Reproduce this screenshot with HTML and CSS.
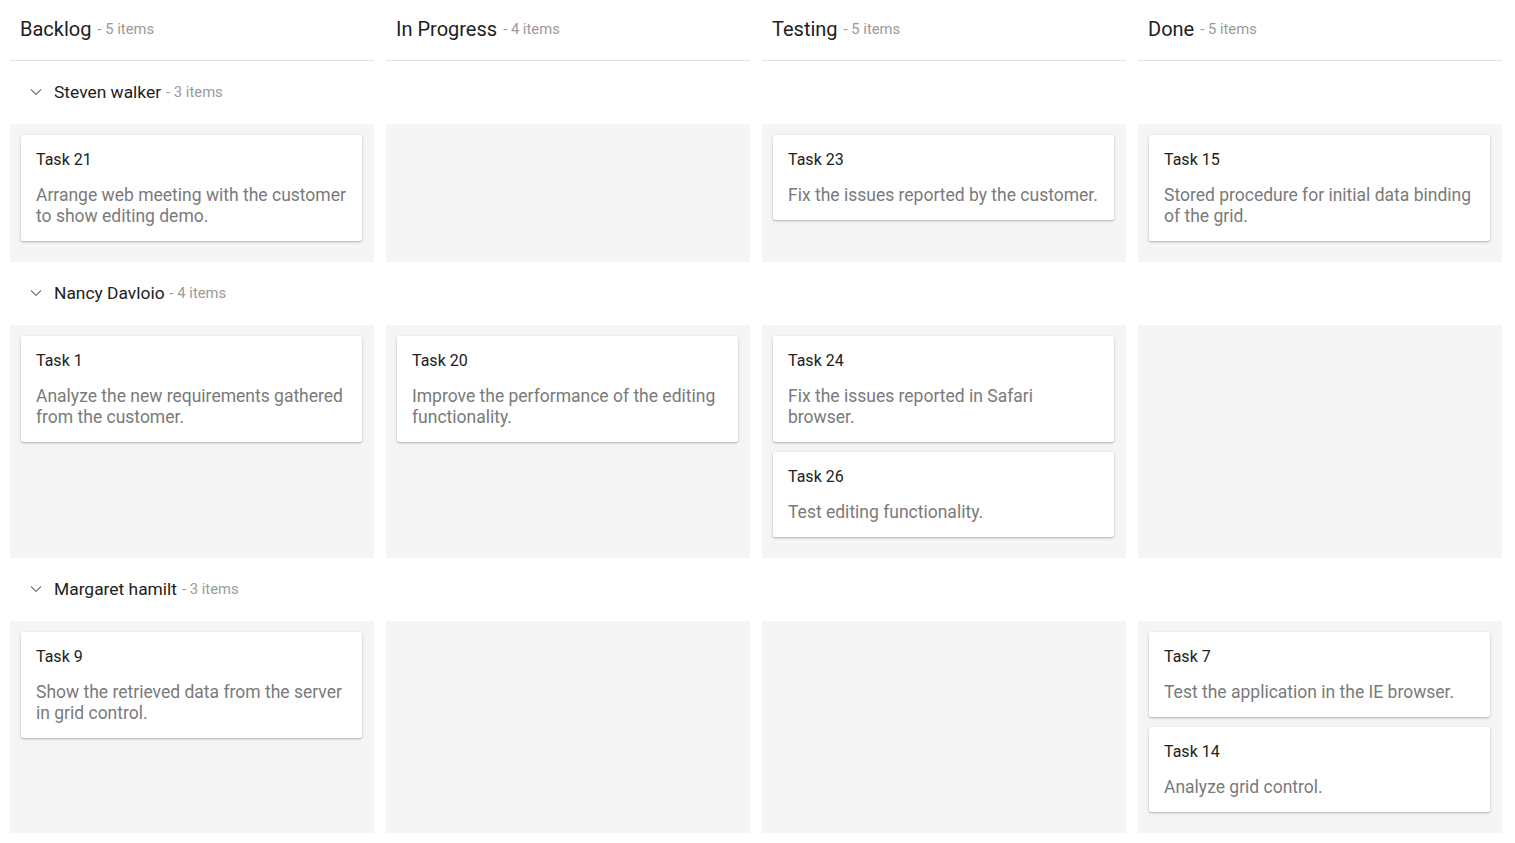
FILE: index.html
```
<!DOCTYPE html>
<html lang="en">
<head>
	<meta charset="UTF-8">
	<title>Kanban</title>
	<link rel="stylesheet" href="styles.css">
</head>
<body>
	<div class="kanban">
		<div class="head-row">
			<div class="head-cell"><span class="head-text">Backlog</span> <span class="count">- 5 items</span></div>
			<div class="head-cell"><span class="head-text">In Progress</span> <span class="count">- 4 items</span></div>
			<div class="head-cell"><span class="head-text">Testing</span> <span class="count">- 5 items</span></div>
			<div class="head-cell"><span class="head-text">Done</span> <span class="count">- 5 items</span></div>
		</div>

		<div class="lane-head">
			<svg class="chevron" width="12" height="8" viewBox="0 0 12 8"><path d="M1 1.5 L6 6.5 L11 1.5" fill="none" stroke="#757575" stroke-width="1.2"/></svg>
			<span class="lane-name">Steven walker</span> <span class="count">- 3 items</span>
		</div>
		<div class="lane">
			<div class="cell">
				<div class="card"><div class="card-title">Task 21</div><div class="card-text">Arrange web meeting with the customer to show editing demo.</div></div>
			</div>
			<div class="cell"></div>
			<div class="cell">
				<div class="card"><div class="card-title">Task 23</div><div class="card-text">Fix the issues reported by the customer.</div></div>
			</div>
			<div class="cell">
				<div class="card"><div class="card-title">Task 15</div><div class="card-text">Stored procedure for initial data binding of the grid.</div></div>
			</div>
		</div>

		<div class="lane-head">
			<svg class="chevron" width="12" height="8" viewBox="0 0 12 8"><path d="M1 1.5 L6 6.5 L11 1.5" fill="none" stroke="#757575" stroke-width="1.2"/></svg>
			<span class="lane-name">Nancy Davloio</span> <span class="count">- 4 items</span>
		</div>
		<div class="lane">
			<div class="cell">
				<div class="card"><div class="card-title">Task 1</div><div class="card-text">Analyze the new requirements gathered from the customer.</div></div>
			</div>
			<div class="cell">
				<div class="card"><div class="card-title">Task 20</div><div class="card-text">Improve the performance of the editing functionality.</div></div>
			</div>
			<div class="cell">
				<div class="card"><div class="card-title">Task 24</div><div class="card-text">Fix the issues reported in Safari browser.</div></div>
				<div class="card"><div class="card-title">Task 26</div><div class="card-text">Test editing functionality.</div></div>
			</div>
			<div class="cell"></div>
		</div>

		<div class="lane-head">
			<svg class="chevron" width="12" height="8" viewBox="0 0 12 8"><path d="M1 1.5 L6 6.5 L11 1.5" fill="none" stroke="#757575" stroke-width="1.2"/></svg>
			<span class="lane-name">Margaret hamilt</span> <span class="count">- 3 items</span>
		</div>
		<div class="lane">
			<div class="cell">
				<div class="card"><div class="card-title">Task 9</div><div class="card-text">Show the retrieved data from the server in grid control.</div></div>
			</div>
			<div class="cell"></div>
			<div class="cell"></div>
			<div class="cell">
				<div class="card"><div class="card-title">Task 7</div><div class="card-text">Test the application in the IE browser.</div></div>
				<div class="card"><div class="card-title">Task 14</div><div class="card-text">Analyze grid control.</div></div>
			</div>
		</div>
	</div>
</body>
</html>
```

FILE: styles.css
```
html {
	font-family: Roboto, "Liberation Sans", sans-serif;
}
body {
	margin: 0;
	padding: 0;
	background: #fff;
}
.kanban {
	padding: 0 13px 0 10px;
}
.head-row, .lane {
	display: grid;
	grid-template-columns: repeat(4, 1fr);
	column-gap: 12px;
}
.head-cell {
	height: 61px;
	box-sizing: border-box;
	border-bottom: 1px solid #e0e0e0;
	display: flex;
	align-items: center;
	padding: 0 0 2px 10px;
}
.head-text {
	font-size: 20px;
	color: #212121;
	margin-right: 6px;
}
.count {
	font-size: 14.8px;
	color: #9a9a9a;
}
.lane-head {
	height: 63px;
	box-sizing: border-box;
	display: flex;
	align-items: center;
	padding: 0 0 2px 20px;
}
.chevron {
	margin-right: 12px;
}
.lane-name {
	font-size: 17.4px;
	color: #212121;
	margin-right: 5px;
}
.cell {
	background: #f5f5f5;
	padding: 11px 12px 11px 11px;
	min-height: 20px;
}
.card {
	background: #fff;
	border-radius: 2px;
	box-shadow: 0 1px 3px rgba(0, 0, 0, 0.22), 0 1px 1px rgba(0, 0, 0, 0.08);
	padding: 13px 15px 14px;
	margin-bottom: 10px;
}
.card-title {
	font-size: 16px;
	line-height: 24px;
	color: #212121;
	margin-bottom: 13px;
}
.card-text {
	font-size: 17.5px;
	line-height: 21px;
	color: #7a7a7a;
}
```
